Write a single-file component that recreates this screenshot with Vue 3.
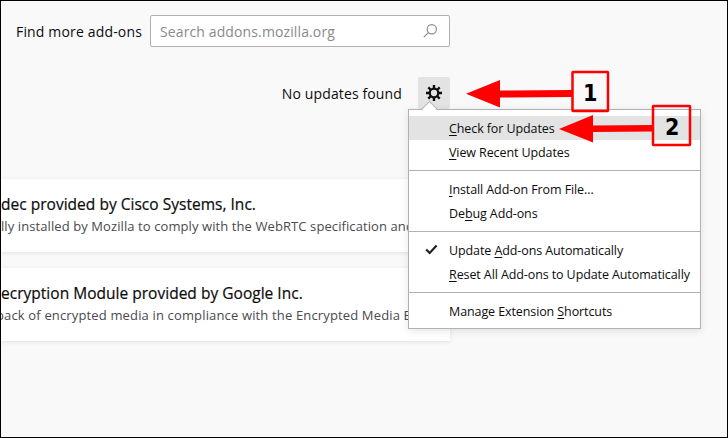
<script setup>
const groups = [
  [
    { pre: '', key: 'C', post: 'heck for Updates', active: true },
    { pre: '', key: 'V', post: 'iew Recent Updates' },
  ],
  [
    { pre: '', key: 'I', post: 'nstall Add-on From File...' },
    { pre: 'De', key: 'b', post: 'ug Add-ons' },
  ],
  [
    { pre: 'Update ', key: 'A', post: 'dd-ons Automatically', checked: true },
    { pre: '', key: 'R', post: 'eset All Add-ons to Update Automatically' },
  ],
  [{ pre: 'Manage Extension ', key: 'S', post: 'hortcuts' }],
]
const cards = [
  { title: 'dec provided by Cisco Systems, Inc.', desc: 'lly installed by Mozilla to comply with the WebRTC specification and' },
  { title: 'ecryption Module provided by Google Inc.', desc: 'pack of encrypted media in compliance with the Encrypted Media Ex' },
]
</script>

<template>
  <div class="page">
    <header class="search-row">
      <span class="find">Find more add-ons</span>
      <div class="search">
        <span class="placeholder">Search addons.mozilla.org</span>
        <svg class="lens" width="16" height="16" viewBox="0 0 16 16" fill="none" stroke="#8c8c8c" stroke-width="1.2">
          <circle cx="9.8" cy="6.2" r="4.6" />
          <path d="M6.4 9.6 1.8 14.2" />
        </svg>
      </div>
    </header>

    <div class="status-row">
      <span class="status">No updates found</span>
      <div class="gear-btn">
        <svg width="18" height="18" viewBox="0 0 18 18">
          <g stroke="#0c0c0d" stroke-width="2.4" stroke-linecap="butt">
            <path d="M9 1v3M9 14v3M1 9h3M14 9h3M3.300 3.300l2.200 2.200M12.500 12.500l2.200 2.200M14.700 3.300l-2.200 2.200M5.500 12.500l-2.200 2.200" />
          </g>
          <circle cx="9" cy="9" r="4.300" fill="none" stroke="#0c0c0d" stroke-width="2.300" />
        </svg>
      </div>
    </div>

    <section class="cards">
      <article v-for="c in cards" :key="c.title" class="card">
        <h3>{{ c.title }}</h3>
        <p>{{ c.desc }}</p>
      </article>
    </section>

    <div class="menu">
      <span class="notch"></span>
      <div v-for="(g, i) in groups" :key="i" class="group">
        <div v-for="item in g" :key="item.post" class="item" :class="{ active: item.active }">
          <svg v-if="item.checked" class="check" width="13" height="11" viewBox="0 0 13 11" fill="none" stroke="#222" stroke-width="2.2">
            <path d="M1.200 5.400 4.700 9 11.600 1.600" />
          </svg>
          <span>{{ item.pre }}<u>{{ item.key }}</u>{{ item.post }}</span>
        </div>
      </div>
    </div>

    <svg class="arrows" width="728" height="438" viewBox="0 0 728 438">
      <g fill="#ff0000">
        <path d="M466 93.700 500 80V90.500L572 90V97L500 97.500V107.500Z" />
        <path d="M559 129 593 115V125.500L654 125V131.500L593 132V142.500Z" />
      </g>
      <g fill="none" stroke="#ff0000" stroke-width="2.500">
        <rect x="572.500" y="72" width="35.500" height="39" rx="0.500" />
        <rect x="653" y="106" width="37" height="39" rx="0.500" />
      </g>
    </svg>
    <span class="num n1">1</span>
    <span class="num n2">2</span>
  </div>
</template>

<style scoped>
.page {
  position: relative;
  width: 728px;
  height: 438px;
  box-sizing: border-box;
  overflow: hidden;
  background: #f9f9fa;
  border: 1px solid #000;
  font-family: "Open Sans", "Noto Sans", sans-serif;
  color: #0c0c0d;
}
.search-row {
  display: flex;
  align-items: center;
  gap: 8px;
  padding: 14px 0 0 15px;
}
.find {
  font-size: 14px;
  letter-spacing: 0.16px;
  white-space: nowrap;
}
.search {
  width: 300px;
  height: 32px;
  box-sizing: border-box;
  display: flex;
  align-items: center;
  justify-content: space-between;
  padding: 0 11px 0 9px;
  background: #fff;
  border: 1px solid #b1b1b3;
  border-radius: 2px;
}
.placeholder {
  font-size: 14px;
  letter-spacing: 0.12px;
  color: #8a8a8a;
}
.status-row {
  display: flex;
  align-items: center;
  justify-content: flex-end;
  width: 449px;
  margin-top: 30px;
}
.status {
  font-size: 14px;
  letter-spacing: 0.13px;
  margin-right: 16px;
}
.gear-btn {
  width: 32px;
  height: 32px;
  display: flex;
  align-items: center;
  justify-content: center;
  background: #e3e3e4;
  border-radius: 2px;
}
.cards {
  display: flex;
  flex-direction: column;
  gap: 16px;
  width: 449px;
  margin-top: 70px;
}
.card {
  height: 73px;
  box-sizing: border-box;
  padding-top: 15px;
  background: #fff;
  overflow: hidden;
  white-space: nowrap;
  box-shadow: 0 1px 4px rgba(12, 12, 13, 0.1);
}
.card h3 {
  margin: 0;
  font-size: 15.500px;
  font-weight: 400;
  line-height: 21px;
  letter-spacing: 0.02px;
  -webkit-text-stroke: 0.2px #0c0c0d;
}
.card p {
  margin: 1px 0 0;
  font-size: 13px;
  line-height: 20px;
  color: #4a4a4f;
  letter-spacing: 0.09px;
}
.card:nth-child(2) p {
  margin-left: -5px;
  letter-spacing: 0.15px;
}
.menu {
  position: absolute;
  left: 407px;
  top: 108px;
  width: 293px;
  box-sizing: border-box;
  background: #fff;
  border: 1px solid #b1b1b3;
  padding-top: 6px;
  box-shadow: 0 2px 8px rgba(12, 12, 13, 0.1);
  font-size: 12.500px;
  letter-spacing: -0.1px;
}
.notch {
  position: absolute;
  left: 15px;
  top: -7px;
  width: 10px;
  height: 10px;
  background: #fff;
  border-left: 1px solid #b1b1b3;
  border-top: 1px solid #b1b1b3;
  transform: rotate(45deg);
}
.group {
  position: relative;
  padding-bottom: 6px;
  border-bottom: 1px solid #b1b1b3;
  margin-bottom: 6px;
}
.group:last-child {
  border-bottom: 0;
  margin-bottom: 0;
  padding-bottom: 5px;
}
.item {
  position: relative;
  height: 24px;
  line-height: 26px;
  padding-left: 40px;
  white-space: nowrap;
}
.item.active {
  background: #e3e3e4;
}
.check {
  position: absolute;
  left: 16px;
  top: 6px;
}
u {
  text-underline-offset: 2px;
}
.arrows {
  position: absolute;
  left: -1px;
  top: -1px;
  pointer-events: none;
}
.num {
  position: absolute;
  font-family: "DejaVu Sans Condensed", "DejaVu Sans", sans-serif;
  font-weight: 700;
  font-size: 23px;
  line-height: 28px;
  color: #000;
}
.n1 { left: 582px; top: 78px; }
.n2 { left: 664px; top: 112px; }
</style>
<style>
html, body { margin: 0; background: #f9f9fa; }
</style>
